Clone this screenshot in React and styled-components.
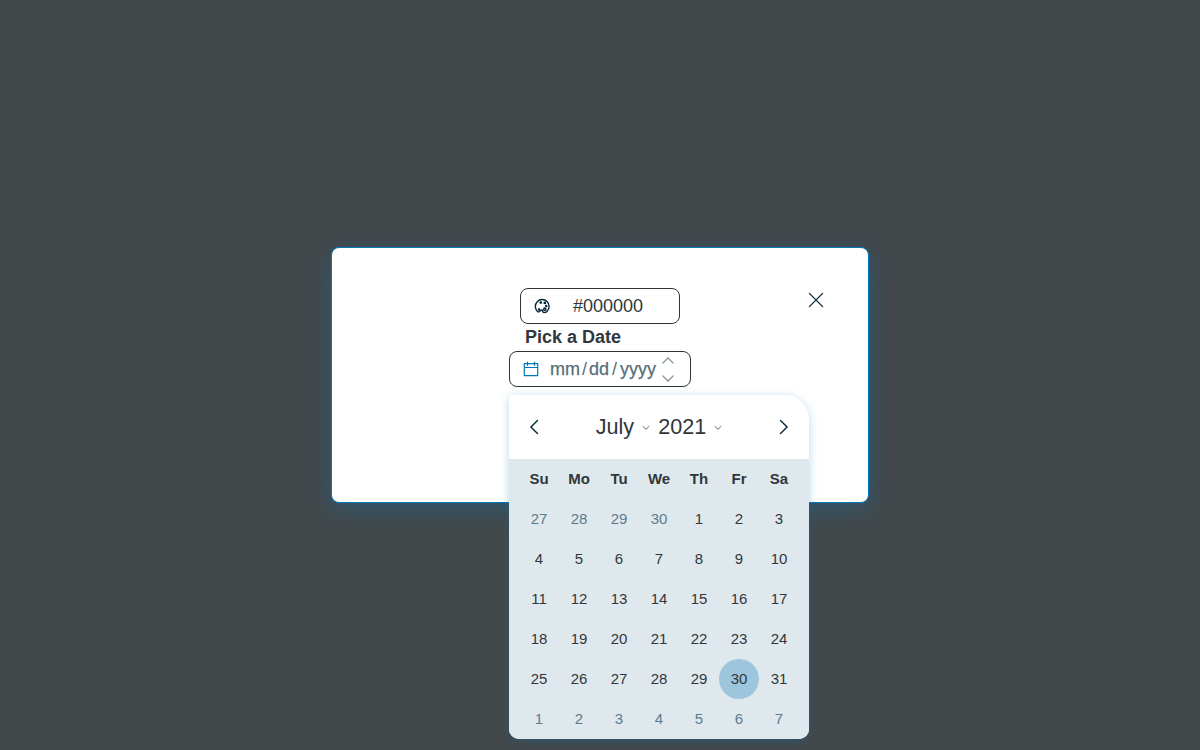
import React from "react";
import styled, { createGlobalStyle } from "styled-components";

const GlobalStyle = createGlobalStyle`
  *, *::before, *::after { box-sizing: border-box; }
  html, body { margin: 0; height: 100%; overflow: hidden; }
  body { font-family: "Liberation Sans", Arial, sans-serif; color: #2f373a; }
  button { border: 0; padding: 0; margin: 0; background: none; font: inherit; color: inherit; }
`;

const Backdrop = styled.div`
  height: 100vh;
  display: flex;
  align-items: center;
  justify-content: center;
  background: #43484b;
`;

const Dialog = styled.section`
  width: 538px;
  height: 256px;
  padding: 40px;
  display: grid;
  grid-template-columns: 1fr auto 1fr;
  align-items: start;
  background: #fff;
  border: 1px solid #0079b8;
  border-radius: 8px;
  box-shadow: 0 6px 24px rgba(0, 121, 184, 0.34);
`;

const Form = styled.div`
  grid-column: 2;
  width: 182px;
  display: flex;
  flex-direction: column;
  align-items: center;
`;

const Field = styled.div`
  width: ${(p) => p.$width}px;
  height: 36px;
  padding-left: ${(p) => p.$inset}px;
  display: flex;
  align-items: center;
  border: 1px solid #2d3538;
  border-radius: 8px;
  font-size: 18px;
  background: #fff;
`;

const ColorValue = styled.span`
  margin-left: 23px;
`;

const Label = styled.label`
  align-self: flex-start;
  height: 27px;
  padding-left: 16px;
  font-size: 18px;
  font-weight: 700;
  line-height: 27px;
`;

const DateAnchor = styled.div`
  position: relative;
`;

const DateParts = styled.span`
  display: flex;
  margin-left: 11px;
  color: #566e79;
`;

const DatePart = styled.span`
  -webkit-text-stroke: 0.25px currentColor;
`;

const Slash = styled.span`
  margin: 0 ${(p) => p.$gap}px;
`;

const Steppers = styled.div`
  height: 100%;
  margin-left: 6px;
  padding: 5px 0 4px;
  display: flex;
  flex-direction: column;
  justify-content: space-between;
`;

const Icon = styled.svg`
  display: block;
  flex: none;
  width: ${(p) => p.$w}px;
  height: ${(p) => p.$h || p.$w}px;
  fill: none;
  stroke: ${(p) => p.$color || "#00283a"};
  stroke-width: ${(p) => p.$stroke || 1.4};
  stroke-linecap: round;
  stroke-linejoin: round;
`;

const CloseButton = styled.button`
  grid-column: 3;
  justify-self: end;
  margin: 4px 4px 0 0;
`;

const Calendar = styled.div`
  position: absolute;
  z-index: 1;
  top: 44px;
  left: 0;
  width: 300px;
  border-radius: 0 24px 10px 10px;
  overflow: hidden;
  background: #fff;
  box-shadow: 0 2px 10px rgba(0, 121, 184, 0.28);
`;

const CalendarHeader = styled.header`
  height: 64px;
  padding: 0 20px;
  display: flex;
  align-items: center;
  justify-content: space-between;
`;

const Period = styled.div`
  display: flex;
  align-items: center;
  gap: 8px;
  font-size: 21.6px;
`;

const PeriodButton = styled.button`
  display: flex;
  align-items: center;
  gap: 8px;
`;

const Days = styled.div`
  padding: 0 10px;
  display: grid;
  grid-template-columns: repeat(7, 40px);
  grid-auto-rows: 40px;
  background: #dfe8ed;
  font-size: 15px;
`;

const Weekday = styled.span`
  display: grid;
  place-items: center;
  padding-bottom: 1px;
  font-weight: 700;
`;

const Day = styled.button`
  padding-bottom: 1px;
  border-radius: 50%;
  color: ${(p) => (p.$outside ? "#5c7c8b" : "inherit")};
  background: ${(p) => (p.$selected ? "#9dc5dc" : "none")};
`;

const Chevron = ({ up }) => (
  <Icon $w={12} $h={7} $color="#7b878d" $stroke={1.2} viewBox="0 0 12 7">
    <path d={up ? "M.8 6.1 6 .9 11.2 6.1" : "M.8.8 6 6 11.2.8"} />
  </Icon>
);

const SmallChevron = () => (
  <Icon $w={8} $h={6} $color="#606b70" $stroke={1} viewBox="0 0 8 6">
    <path d="M.9 2.3 4 5.3 7.1 2.3" />
  </Icon>
);

const Palette = () => (
  <Icon $w={16} viewBox="0 0 16 16" $stroke={1.4}>
    <path d="M3.4 13.4A6.9 6.9 0 1 1 13.2 13.2C12 14.5 9.8 14.9 9 14.1C8.1 13.2 8.9 12.3 7.9 11.9C6.9 11.6 6.4 12.9 5.3 13.6C4.6 14 3.9 13.9 3.4 13.4Z" />
    <g fill="#00283a" stroke="none">
      <circle cx="6.8" cy="4.6" r="1.35" />
      <circle cx="10.8" cy="4.9" r="1.35" />
      <circle cx="12.2" cy="7.9" r="1.25" />
      <circle cx="5" cy="11.4" r="1.25" />
    </g>
    <circle cx="10.8" cy="11.2" r="1.15" />
  </Icon>
);

const weekdays = ["Su", "Mo", "Tu", "We", "Th", "Fr", "Sa"];
const days = Array.from({ length: 42 }, (_, i) => {
  if (i < 4) return { day: 27 + i, outside: true };
  if (i > 34) return { day: i - 34, outside: true };
  return { day: i - 3, outside: false };
});

export default function App() {
  return (
    <>
      <GlobalStyle />
      <Backdrop>
        <Dialog role="dialog">
          <Form>
            <Field $width={160} $inset={13}>
              <Palette />
              <ColorValue>#000000</ColorValue>
            </Field>
            <Label>Pick a Date</Label>
            <DateAnchor>
              <Field $width={182} $inset={13}>
                <Icon $w={16} $color="#0079b8" $stroke={1.2} viewBox="0 0 16 16">
                  <path d="M1.3 2.7H14.7V14.6H1.3ZM1.3 6.5H14.7M4.5 1V4.3M11.5 1V4.3" />
                </Icon>
                <DateParts>
                  <DatePart>mm</DatePart>
                  <Slash $gap={2}>/</Slash>
                  <DatePart>dd</DatePart>
                  <Slash $gap={3}>/</Slash>
                  <DatePart>yyyy</DatePart>
                </DateParts>
                <Steppers>
                  <Chevron up />
                  <Chevron />
                </Steppers>
              </Field>
              <Calendar>
                <CalendarHeader>
                  <button aria-label="Previous month">
                    <Icon $w={10} $h={16} viewBox="0 0 10 16" $stroke={1.4}>
                      <path d="M8.5 1.4 1.9 8 8.5 14.6" />
                    </Icon>
                  </button>
                  <Period>
                    <PeriodButton>July<SmallChevron /></PeriodButton>
                    <PeriodButton>2021<SmallChevron /></PeriodButton>
                  </Period>
                  <button aria-label="Next month">
                    <Icon $w={10} $h={16} viewBox="0 0 10 16" $stroke={1.4}>
                      <path d="M1.5 1.4 8.1 8 1.5 14.6" />
                    </Icon>
                  </button>
                </CalendarHeader>
                <Days>
                  {weekdays.map((name) => <Weekday key={name}>{name}</Weekday>)}
                  {days.map(({ day, outside }, i) => (
                    <Day key={i} $outside={outside} $selected={!outside && day === 30}>{day}</Day>
                  ))}
                </Days>
              </Calendar>
            </DateAnchor>
          </Form>
          <CloseButton aria-label="Close">
            <Icon $w={16} viewBox="0 0 16 16" $stroke={1.3}>
              <path d="M1.4 1.4 14.6 14.6M14.6 1.4 1.4 14.6" />
            </Icon>
          </CloseButton>
        </Dialog>
      </Backdrop>
    </>
  );
}
